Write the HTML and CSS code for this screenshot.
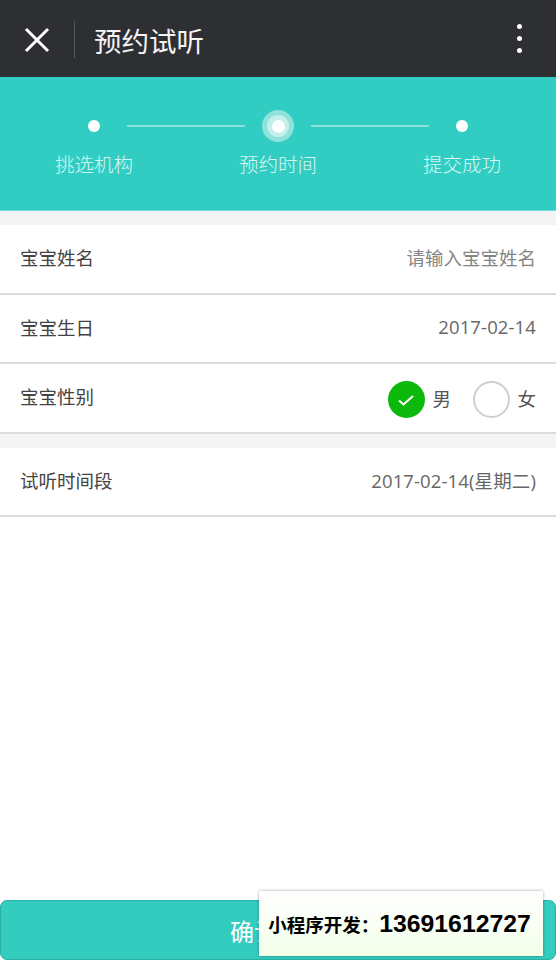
FILE: index.html
```
<!DOCTYPE html>
<html lang="zh">
<head>
<meta charset="utf-8">
<title>预约试听</title>
<link rel="stylesheet" href="styles.css">
</head>
<body>
<div class="page">
  <header class="nav">
    <svg class="close" width="26" height="26" viewBox="0 0 26 26"><path d="M2 2 L24 24 M24 2 L2 24" stroke="#fff" stroke-width="3" fill="none"/></svg>
    <span class="divider"></span>
    <h1 class="title">预约试听</h1>
    <span class="more"><i></i><i></i><i></i></span>
  </header>
  <section class="steps">
    <div class="step">
      <div class="mark"><span class="dot"></span></div>
      <div class="label">挑选机构</div>
    </div>
    <span class="line"></span>
    <div class="step">
      <div class="mark"><span class="halo"><span class="ring"><span class="core"></span></span></span></div>
      <div class="label">预约时间</div>
    </div>
    <span class="line"></span>
    <div class="step">
      <div class="mark"><span class="dot"></span></div>
      <div class="label">提交成功</div>
    </div>
  </section>
  <div class="gap"></div>
  <div class="row"><span>宝宝姓名</span><span class="placeholder">请输入宝宝姓名</span></div>
  <div class="row"><span>宝宝生日</span><span class="value">2017-02-14</span></div>
  <div class="row">
    <span>宝宝性别</span>
    <div class="radios">
      <span class="radio on"><svg width="18" height="14" viewBox="0 0 18 14"><path d="M2 7.5 L6.5 11.5 L16 3" stroke="#fff" stroke-width="2" fill="none"/></svg></span><span class="radio-label">男</span>
      <span class="radio second"></span><span class="radio-label">女</span>
    </div>
  </div>
  <div class="gap"></div>
  <div class="row"><span>试听时间段</span><span class="value">2017-02-14(星期二)</span></div>
  <div class="spacer"></div>
  <button class="confirm">确认预约</button>
  <div class="promo"><span class="promo-label">小程序开发：</span><span class="promo-phone">13691612727</span></div>
</div>
</body>
</html>
```
FILE: styles.css
```
* { box-sizing: border-box; }
html, body { margin: 0; padding: 0; }
body {
  background: #fff;
  font-family: "Open Sans", "Noto Sans CJK SC", sans-serif;
  color: #444;
}
.page {
  position: relative;
  width: 556px;
  height: 960px;
  display: flex;
  flex-direction: column;
  overflow: hidden;
}
.nav {
  height: 77px;
  flex: none;
  background: #2e2f33;
  display: flex;
  align-items: center;
  padding: 2px 34px 0 24px;
}
.close { flex: none; }
.divider {
  width: 1px;
  height: 37px;
  background: #55565a;
  margin-left: 24px;
}
.title {
  flex: 1;
  margin: 0 0 0 19px;
  font-weight: 400;
  font-size: 27.5px;
  color: #f4f4f4;
  font-family: "Noto Sans CJK SC", sans-serif;
}
.more { display: flex; flex-direction: column; gap: 6.5px; margin-top: -2px; }
.more i { display: block; width: 5.5px; height: 5.5px; border-radius: 50%; background: #fff; }
.steps {
  height: 134px;
  flex: none;
  background: #32cdc2;
  border-bottom: 1px solid #6fdcd4;
  display: flex;
  align-items: flex-start;
  justify-content: center;
  padding-top: 33px;
}
.step { width: 100px; flex: none; display: flex; flex-direction: column; align-items: center; }
.mark { height: 32px; display: flex; align-items: center; justify-content: center; }
.dot { width: 12px; height: 12px; border-radius: 50%; background: #fff; }
.halo {
  width: 32px; height: 32px; border-radius: 50%;
  background: #8fe2db;
  display: flex; align-items: center; justify-content: center;
}
.ring {
  width: 22px; height: 22px; border-radius: 50%;
  background: #c5efeb;
  display: flex; align-items: center; justify-content: center;
}
.core { width: 13px; height: 13px; border-radius: 50%; background: #fff; }
.label {
  margin-top: 8px;
  font-size: 19.5px;
  line-height: 28px;
  color: #d9f6f3;
  white-space: nowrap;
  font-family: "Noto Sans CJK SC", sans-serif;
  font-weight: 300;
}
.line { width: 118px; height: 2px; margin-top: 15px; background: #8fe2db; flex: none; margin-left: -17px; margin-right: -17px; }
.gap { height: 14px; flex: none; background: #f4f4f4; }
.row {
  height: 69.5px;
  flex: none;
  background: #fff;
  border-bottom: 2px solid #dcdcdc;
  padding: 0 20px 3px 20px;
  display: flex;
  align-items: center;
  justify-content: space-between;
  font-size: 18.5px;
  color: #444;
}
.value { color: #666; letter-spacing: 0.12px; }
.placeholder { color: #858585; }
.radios { display: flex; align-items: center; margin-top: 7px; }
.radio {
  width: 37px; height: 37px; border-radius: 50%;
  border: 2px solid #cfcfcf;
  display: flex; align-items: center; justify-content: center;
  background: #fff;
}
.radio.on { background: #0bb80b; border: none; }
.radio.second { margin-left: 22px; }
.radio-label { margin-left: 7.5px; margin-top: -3px; color: #555; }
.spacer { flex: 1; }
.confirm {
  height: 60px;
  flex: none;
  width: 100%;
  background: #35ccc0;
  border: 1px solid #27b0a6;
  border-radius: 7px;
  color: #fff;
  font-family: "Noto Sans CJK SC", sans-serif;
  font-size: 24px;
  padding: 0;
}
.promo {
  position: absolute;
  left: 259px;
  top: 891px;
  width: 284px;
  height: 65px;
  background: linear-gradient(#ffffff, #f3ffe9);
  box-shadow: 0 0 3px rgba(0,0,0,.35);
  display: flex;
  align-items: center;
  justify-content: center;
  padding: 1px 3px 0 0;
  color: #000;
  font-weight: 700;
  white-space: nowrap;
}
.promo-label { font-size: 18.5px; font-family: "Noto Sans CJK SC", sans-serif; font-weight: 700; }
.promo-phone { font-size: 24.8px; font-family: "Liberation Sans", sans-serif; }
```
